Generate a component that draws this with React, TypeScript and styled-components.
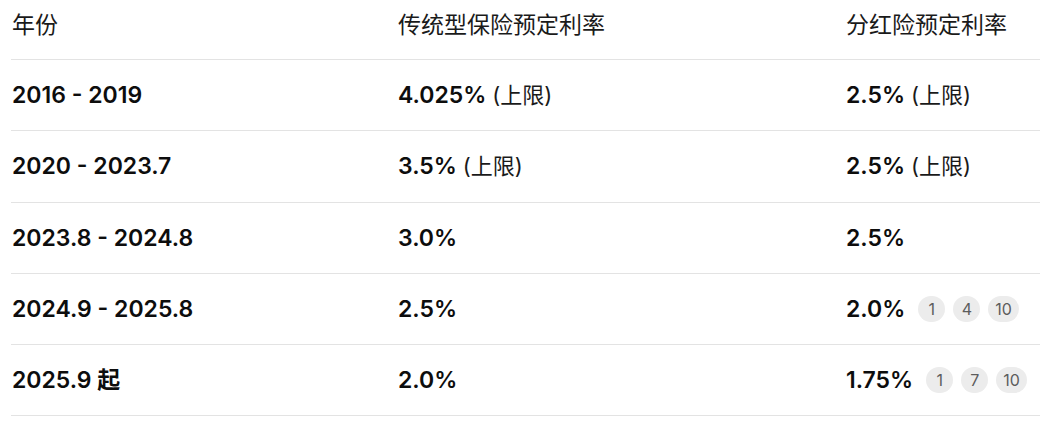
import React from 'react'
import styled, { createGlobalStyle } from 'styled-components'

const GlobalStyle = createGlobalStyle`
  html, body {
    margin: 0;
    padding: 0;
    background: #fff;
  }
  body {
    font-family: Inter, "Noto Sans CJK SC", sans-serif;
    color: #0d0d0d;
  }
`

const Wrapper = styled.div`
  padding: 0 1px 0 11px;
`

const Table = styled.div`
  display: grid;
  grid-template-columns: 386px 448px 1fr;
`

const HeaderCell = styled.div`
  height: 60px;
  box-sizing: border-box;
  border-bottom: 1px solid #e3e3e3;
  padding: 9px 0 0 1px;
  display: flex;
  align-items: flex-start;
  font-size: 23px;
  font-weight: 400;
  line-height: 32px;
  color: #1a1a1a;
`

const Cell = styled.div<{ $bold?: boolean }>`
  height: 71.3px;
  box-sizing: border-box;
  border-bottom: 1px solid #e3e3e3;
  padding-left: 1px;
  display: flex;
  align-items: center;
  font-size: 23px;
  line-height: 32px;
  font-weight: ${({ $bold }) => ($bold ? 600 : 400)};
`

const Strong = styled.span`
  font-weight: 600;
`

const Note = styled.span`
  font-weight: 400;
  font-size: 22px;
  margin-left: 6px;
  color: #1a1a1a;
`

const Badges = styled.span`
  display: inline-flex;
  gap: 8px;
  margin-left: 13px;
`

const Badge = styled.span`
  display: inline-flex;
  align-items: center;
  justify-content: center;
  min-width: 27px;
  height: 26px;
  padding: 0 7px;
  box-sizing: border-box;
  border-radius: 13px;
  background: #ececec;
  color: #5d5d5d;
  font-size: 16px;
  font-weight: 400;
`

interface Row {
  years: string
  traditional: string
  traditionalNote?: string
  dividend: string
  dividendNote?: string
  refs?: string[]
}

const rows: Row[] = [
  { years: '2016 - 2019', traditional: '4.025%', traditionalNote: '(上限)', dividend: '2.5%', dividendNote: '(上限)' },
  { years: '2020 - 2023.7', traditional: '3.5%', traditionalNote: '(上限)', dividend: '2.5%', dividendNote: '(上限)' },
  { years: '2023.8 - 2024.8', traditional: '3.0%', dividend: '2.5%' },
  { years: '2024.9 - 2025.8', traditional: '2.5%', dividend: '2.0%', refs: ['1', '4', '10'] },
  { years: '2025.9 起', traditional: '2.0%', dividend: '1.75%', refs: ['1', '7', '10'] },
]

const App = () => {
  return (
    <Wrapper>
      <GlobalStyle />
      <Table>
        <HeaderCell>年份</HeaderCell>
        <HeaderCell>传统型保险预定利率</HeaderCell>
        <HeaderCell>分红险预定利率</HeaderCell>
        {rows.map((r) => (
          <React.Fragment key={r.years}>
            <Cell $bold>{r.years}</Cell>
            <Cell>
              <Strong>{r.traditional}</Strong>
              {r.traditionalNote && <Note>{r.traditionalNote}</Note>}
            </Cell>
            <Cell>
              <Strong>{r.dividend}</Strong>
              {r.dividendNote && <Note>{r.dividendNote}</Note>}
              {r.refs && (
                <Badges>
                  {r.refs.map((n) => (
                    <Badge key={n}>{n}</Badge>
                  ))}
                </Badges>
              )}
            </Cell>
          </React.Fragment>
        ))}
      </Table>
    </Wrapper>
  )
}

export default App
